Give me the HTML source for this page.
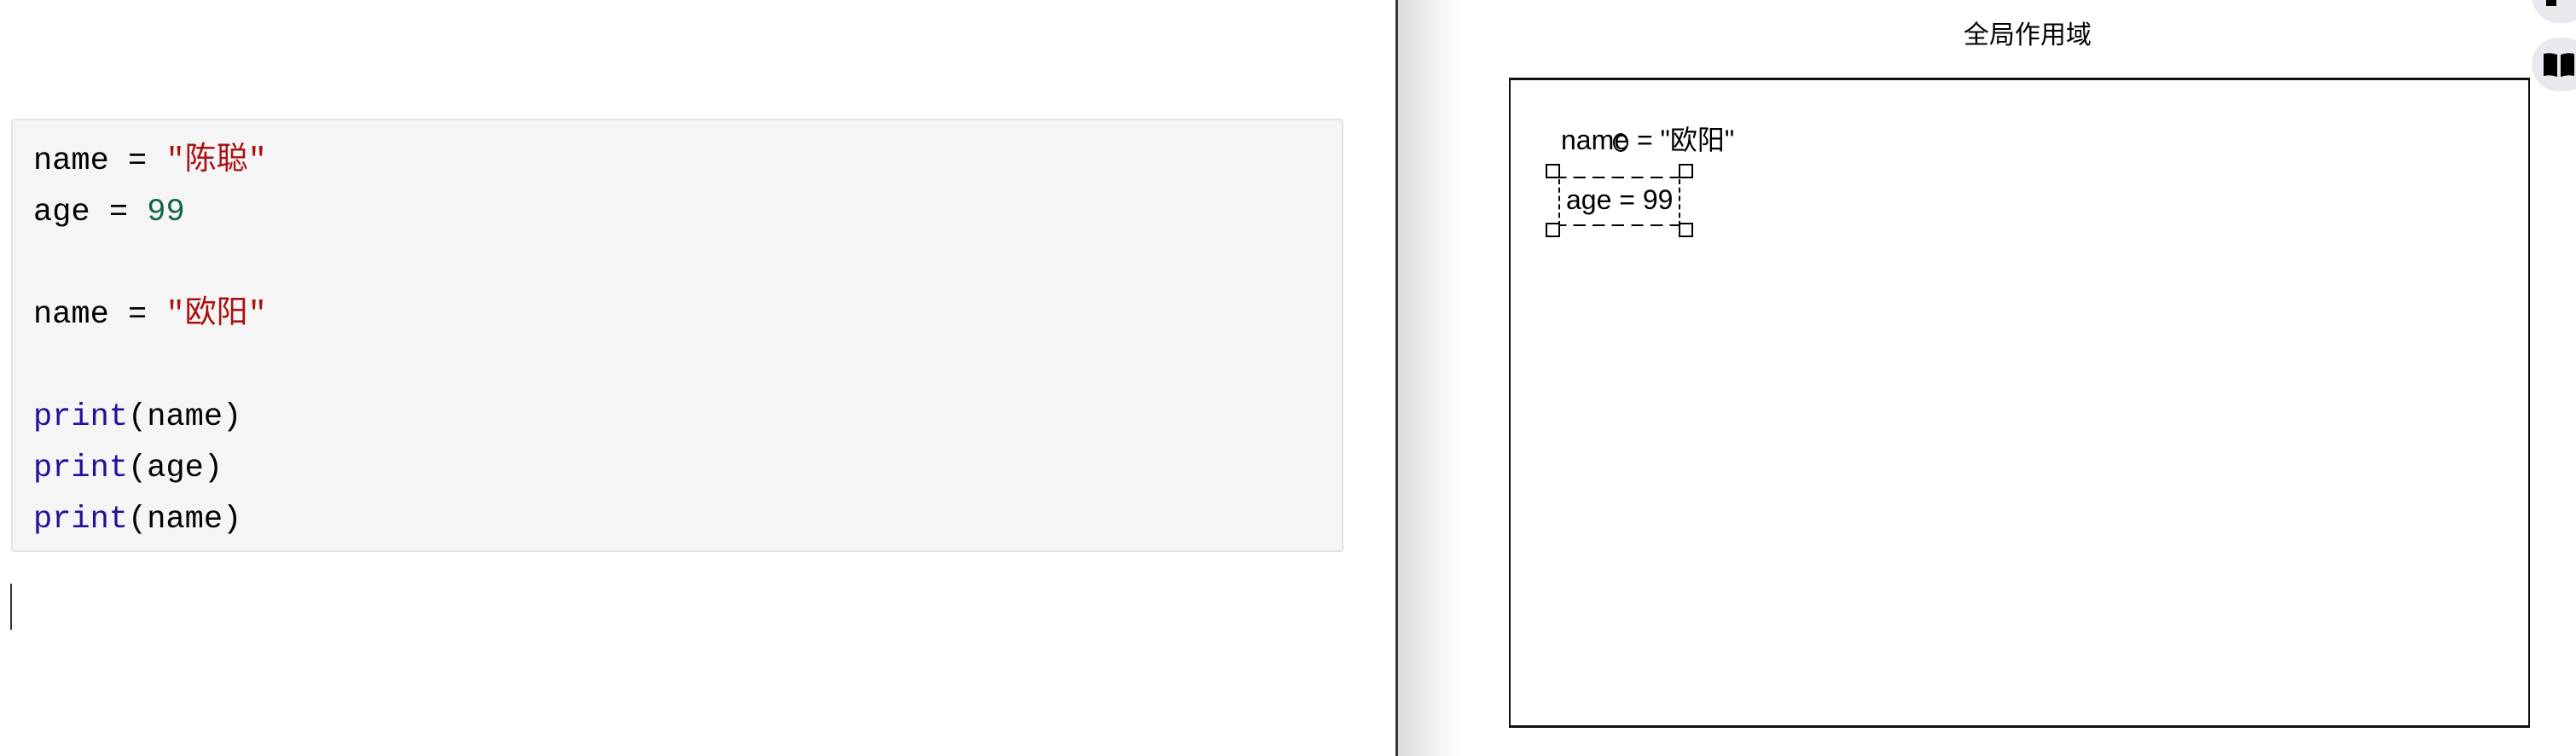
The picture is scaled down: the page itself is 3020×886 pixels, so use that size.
<!DOCTYPE html>
<html><head><meta charset="utf-8"><style>
html,body{margin:0;padding:0;width:3020px;height:886px;overflow:hidden;background:#fff;position:relative;font-family:"Liberation Sans","Noto Sans CJK SC",sans-serif}
.code{position:absolute;left:13px;top:139px;width:1562px;height:508px;background:#f5f5f5;border:2px solid #e3e3e3;border-radius:4px;box-sizing:border-box}
.code pre{margin:0;position:absolute;left:24px;top:18px;font-family:"Liberation Mono","Noto Sans CJK SC",monospace;font-size:37px;line-height:60px;color:#000}
.s{color:#a11}.n{color:#164}.k{color:#219}
.cursor{position:absolute;left:12px;top:684px;width:2px;height:54px;background:#333}
.div{position:absolute;left:1636px;top:0;width:3px;height:886px;background:#333}
.shade{position:absolute;left:1639px;top:0;width:80px;height:886px;background:linear-gradient(to right,#dcdcdc,#f8f8f8 70%,#fff)}
.title{position:absolute;left:2277px;width:200px;text-align:center;top:16px;font-size:30px;color:#000}
.rect{position:absolute;left:1769px;top:91px;width:1197px;height:762px;border:2px solid #111;border-top-width:3px;border-bottom-width:3px;box-sizing:border-box}
.t{position:absolute;font-size:32px;color:#000;white-space:nowrap}
.h{position:absolute;width:13px;height:13px;border:2px solid #000;background:#fff}
.dash{position:absolute;border-color:#000;border-style:dashed;border-width:0}
.tab{position:absolute;left:2968px;width:70px;background:#e8e9ec;border-radius:32px}
</style></head><body>
<div class="code"><pre>name = <span class="s">"陈聪"</span>
age = <span class="n">99</span>

name = <span class="s">"欧阳"</span>

<span class="k">print</span>(name)
<span class="k">print</span>(age)
<span class="k">print</span>(name)</pre></div>
<div class="cursor"></div>
<div class="div"></div><div class="shade"></div>
<div class="title">全局作用域</div>
<div class="rect"></div>
<div class="t" style="left:1830px;top:139px">name = "欧阳"</div>
<div style="position:absolute;left:1891px;top:156px;width:14px;height:18px;border:2px solid #000;border-radius:50%"></div>
<div class="dash" style="left:1824px;top:207px;width:152px;border-top:2px dashed #000;border-image:repeating-linear-gradient(to right,#000 0 14px,transparent 14px 22px) 2"></div>
<div class="dash" style="left:1824px;top:263px;width:152px;border-top:2px dashed #000;border-image:repeating-linear-gradient(to right,#000 0 14px,transparent 14px 22px) 2"></div>
<div class="dash" style="left:1827px;top:210px;height:55px;border-left-width:2px"></div>
<div class="dash" style="left:1968px;top:210px;height:55px;border-left-width:2px"></div>
<div class="t" style="left:1836px;top:216px">age = 99</div>
<div class="h" style="left:1812px;top:192px"></div>
<div class="h" style="left:1968px;top:192px"></div>
<div class="h" style="left:1812px;top:261px"></div>
<div class="h" style="left:1968px;top:261px"></div>
<div class="tab" style="top:-40px;height:67px"></div>
<div style="position:absolute;left:2985px;top:0;width:12px;height:7px;background:#000"></div>
<div class="tab" style="top:44px;height:63px"></div>
<svg style="position:absolute;left:2981px;top:61px" width="38" height="30" viewBox="0 0 38 30"><path d="M1 2 Q9 0 17 3 L17 29 Q9 26 1 28 Z M21 3 Q29 0 37 2 L37 28 Q29 26 21 29 Z" fill="#000"/></svg>
</body></html>
